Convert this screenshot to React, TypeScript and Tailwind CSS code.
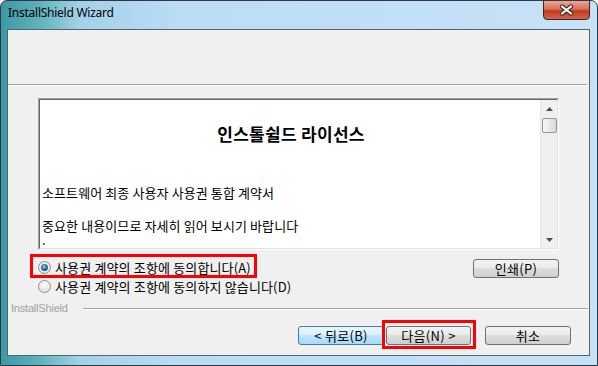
import React from "react";

const KR = { fontFamily: '"Noto Sans CJK KR", "Noto Sans", sans-serif' };

function Radio({ checked }: { checked: boolean }) {
  return (
    <svg width="13" height="13" viewBox="0 0 13 13" className="shrink-0">
      <defs>
        <radialGradient id="rg-in" cx="50%" cy="35%" r="70%">
          <stop offset="0%" stopColor="#ffffff" />
          <stop offset="100%" stopColor="#d2d2d2" />
        </radialGradient>
        <radialGradient id="rg-dot" cx="40%" cy="35%" r="70%">
          <stop offset="0%" stopColor="#8fd3f5" />
          <stop offset="55%" stopColor="#2a86c4" />
          <stop offset="100%" stopColor="#0d3f6e" />
        </radialGradient>
      </defs>
      <circle cx="6.5" cy="6.5" r="6" fill="url(#rg-in)" stroke="#8e8f8f" strokeWidth="1" />
      <circle cx="6.5" cy="6.5" r="4.5" fill="none" stroke="#f4f4f4" strokeWidth="0.8" />
      {checked && <circle cx="6.5" cy="6.5" r="3.2" fill="url(#rg-dot)" stroke="#1c4e78" strokeWidth="0.6" />}
    </svg>
  );
}

function Btn({ children, w, hot }: { children: React.ReactNode; w: string; hot?: boolean }) {
  return (
    <div
      className={
        "h-[19px] rounded-[3px] border flex items-center justify-center text-[13px] leading-none text-black " +
        w +
        (hot
          ? " border-[#3c7fb1] bg-[linear-gradient(#eaf6fd_0%,#d9f0fc_50%,#bee6fd_50%,#a7d9f5_100%)]"
          : " border-[#707070] bg-[linear-gradient(#f2f2f2_0%,#ebebeb_50%,#dddddd_50%,#cfcfcf_100%)]")
      }
      style={KR}
    >
      <span className="tracking-[0.3px]">{children}</span>
    </div>
  );
}

export default function App() {
  return (
    <div className="relative w-[598px] h-[366px] overflow-hidden rounded-t-[7px] border border-[#2d3a42] bg-[linear-gradient(90deg,#3c98a5_0px,#62b3bd_40px,#a2d2e8_78px,#bcdcf6_180px,#c6e2f8_598px)] flex flex-col">
      {/* title bar */}
      <div className="h-[28px] flex items-start justify-between shrink-0">
        <span
          className="pl-[7px] pt-[5px] text-[12px] leading-[14px] text-black tracking-[-0.25px]"
          style={{ fontFamily: '"Noto Sans", "Open Sans", sans-serif' }}
        >
          InstallShield Wizard
        </span>
        <div className="-mt-px mr-[7px] w-[47px] h-[20px] rounded-b-[4px] border border-[#4a2219] bg-[linear-gradient(#e8a899_0%,#d9705a_45%,#c23a1f_55%,#d2654c_100%)] flex items-center justify-center">
          <svg width="15" height="12" viewBox="0 0 15 12">
            <path d="M3 2.5 L12 9.5 M12 2.5 L3 9.5" stroke="#3b2a28" strokeWidth="4.2" strokeLinecap="round" />
            <path d="M3 2.5 L12 9.5 M12 2.5 L3 9.5" stroke="#ffffff" strokeWidth="2.2" strokeLinecap="round" />
          </svg>
        </div>
      </div>

      {/* client area */}
      <div className="ml-[6px] w-[583px] h-[327px] border border-[#56636d] bg-[#f0f0f0] flex flex-col">
        <div className="h-[54px] shrink-0" />
        <div className="h-px bg-[#a0a0a0] mr-[2px]" />
        <div className="h-px bg-white mr-[2px]" />

        {/* license box */}
        <div className="mt-[12px] ml-[30px] w-[521px] h-[152px] border border-t-[#a0a0a0] border-l-[#a0a0a0] border-r-white border-b-white">
          <div className="w-full h-full border border-t-[#696969] border-l-[#696969] border-r-[#e3e3e3] border-b-[#e3e3e3] bg-white flex">
            <div className="flex-1 overflow-hidden pl-[2px] text-black" style={KR}>
              <div className="pt-[22px] h-[45px] text-center text-[17px] leading-[24px] font-bold tracking-[0.3px]">
                인스톨쉴드 라이선스
              </div>
              <div className="mt-[38px] text-[13px] leading-[19px] tracking-[0.1px]">
                소프트웨어 최종 사용자 사용권 통합 계약서
              </div>
              <div className="mt-[14px] text-[13px] leading-[19px] tracking-[0.1px]">
                중요한 내용이므로 자세히 읽어 보시기 바랍니다
              </div>
              <div className="text-[13px] leading-[9px]">.</div>
            </div>
            {/* scrollbar */}
            <div className="w-[17px] h-full bg-[#f0f0f0] border-l border-[#e6e6e6] flex flex-col items-center">
              <div className="h-[17px] w-full flex items-center justify-center">
                <svg width="7" height="4" viewBox="0 0 7 4">
                  <path d="M0 4 L3.5 0 L7 4 Z" fill="#4d4d4d" />
                </svg>
              </div>
              <div className="mt-px w-[15px] h-[15px] rounded-[2px] border border-[#979797] bg-[linear-gradient(90deg,#f6f6f6_0%,#e9e9e9_50%,#d6d6d6_100%)]" />
              <div className="flex-1" />
              <div className="h-[17px] w-full flex items-center justify-center">
                <svg width="7" height="4" viewBox="0 0 7 4">
                  <path d="M0 0 L7 0 L3.5 4 Z" fill="#4d4d4d" />
                </svg>
              </div>
            </div>
          </div>
        </div>

        {/* radios + print */}
        <div className="mt-[8px] ml-[30px] w-[521px] flex justify-between items-start">
          <div className="flex flex-col">
            <div className="relative h-[19px] flex items-center gap-[4px]">
              <Radio checked />
              <span className="text-[13px] leading-none text-black tracking-[0.15px]" style={KR}>
                사용권 계약의 조항에 동의합니다(A)
              </span>
              <div className="absolute -left-[8px] -top-[4px] w-[227px] h-[24px] border-[3px] border-[#ff0000]" />
            </div>
            <div className="h-[19px] flex items-center gap-[4px]">
              <Radio checked={false} />
              <span className="text-[13px] leading-none text-black tracking-[0.15px]" style={KR}>
                사용권 계약의 조항에 동의하지 않습니다(D)
              </span>
            </div>
          </div>
          <div className="mt-px">
            <Btn w="w-[86px]">인쇄(P)</Btn>
          </div>
        </div>

        {/* InstallShield separator */}
        <div className="mt-[6px] h-[13px] flex items-center">
          <span
            className="ml-[3px] text-[11px] leading-none text-[#a0a0a0] tracking-[-0.2px]"
            style={{ fontFamily: '"Liberation Sans", Arial, sans-serif' }}
          >
            InstallShield
          </span>
          <div className="ml-[15px] mr-[1px] flex-1 flex flex-col">
            <div className="h-px bg-[#a0a0a0]" />
            <div className="h-px bg-white" />
          </div>
        </div>

        {/* buttons */}
        <div className="mt-[11px] flex justify-end pr-[18px]">
          <Btn w="w-[86px]" hot>
            &lt; 뒤로(B)
          </Btn>
          <div className="relative ml-[2px]">
            <Btn w="w-[85px]">다음(N) &gt;</Btn>
            <div className="absolute -left-[4px] -top-[6px] w-[94px] h-[29px] border-[3px] border-[#ff0000]" />
          </div>
          <div className="ml-[14px]">
            <Btn w="w-[86px]">취소</Btn>
          </div>
        </div>
      </div>
    </div>
  );
}
